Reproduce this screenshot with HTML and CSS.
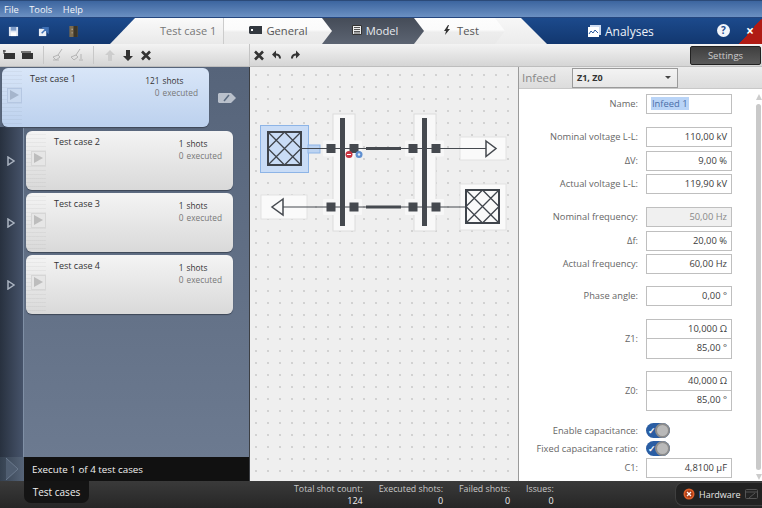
FILE: index.html
```html
<!DOCTYPE html>
<html lang="en">
<head>
<meta charset="utf-8">
<title>Test case 1</title>
<link rel="stylesheet" href="styles.css">
</head>
<body>
<div class="app">
  <nav class="menubar"><span>File</span><span>Tools</span><span>Help</span></nav>

  <header class="ribbon">
    <div class="ribbon-tools">
      <svg class="ic" viewBox="0 0 12 12"><path d="M1 1h10v10H1z" fill="#dfe6f2"/><path d="M3 1h6v4H3z" fill="#7f9cc8"/><path d="M3 7h6v4H3z" fill="#fff"/></svg>
      <svg class="ic" viewBox="0 0 12 12"><path d="M1 3h8v8H1z" fill="#e9eef6"/><path d="M4 8l5-5M6 2h5v5z" stroke="#3f70b5" stroke-width="1.6" fill="#3f70b5"/></svg>
      <svg class="ic" viewBox="0 0 12 12"><path d="M1.500 0h9v12h-9z" fill="#7b6b4f"/><path d="M6 0h4.500v12H6z" fill="#3b3528"/><path d="M4 3h1v1H4zM4 7h1v1H4z" fill="#ddd"/></svg>
    </div>
    <div class="case-tab">Test case 1</div>
    <div class="tab tab-light tab-1">
      <svg class="tab-ic" viewBox="0 0 13 8"><path d="M1 0h12v8H1l-1-1V1z" fill="#33383f"/><path d="M2 3h2v2H2z" fill="#fff"/></svg>General
    </div>
    <div class="tab tab-dark tab-2">
      <svg class="tab-ic tab-ic-s" viewBox="0 0 10 10"><path d="M.500.500h9v9h-9z" fill="#eee" stroke="#333"/><path d="M2 2.500h6M2 4.500h6M2 6.500h6M2 8h6" stroke="#555"/></svg>Model
    </div>
    <div class="tab tab-light tab-3">
      <svg class="tab-ic tab-ic-b" viewBox="0 0 6 10"><path d="M4 0L0 6h2L1 10l5-6H3.500L5 0z" fill="#333"/></svg>Test
    </div>
    <div class="tail"></div>
    <div class="analyses">
      <svg class="an-ic" viewBox="0 0 13 12"><path d="M2 0h11v10h-2V2H2z" fill="#cfdcf0"/><path d="M0 2h11v10H0z" fill="#fff"/><path d="M1 9l2-3 2 2 2-3 3 3" stroke="#2c5aa0" fill="none"/></svg>
      Analyses
    </div>
    <div class="help">?</div>
    <div class="close">×</div>
  </header>

  <div class="toolbar">
    <div class="tb-left">
      <svg class="tb" viewBox="0 0 12 10"><path d="M1 3h11v6H1z" fill="#333"/><path d="M1 0v4M0 1h3" stroke="#333"/></svg>
      <svg class="tb" viewBox="0 0 12 10"><path d="M0 1h10v2H0z" fill="#777"/><path d="M1 3h11v6H1z" fill="#333"/></svg>
      <i class="sep"></i>
      <svg class="tb tb-dim" viewBox="0 0 12 12"><path d="M9 0L5 6M0 8l5-2 2 2-4 3zM0 11h6" stroke="#b4b4b4" fill="none"/></svg>
      <svg class="tb tb-dim" viewBox="0 0 12 12"><path d="M9 0L5 6M0 8l5-2 2 2-4 3zM8 11h4M10 5v5" stroke="#b4b4b4" fill="none"/></svg>
      <i class="sep sep2"></i>
      <svg class="tb-s" viewBox="0 0 10 11"><path d="M5 0l5 5H7v6H3V5H0z" fill="#cdcdcd"/></svg>
      <svg class="tb-s" viewBox="0 0 10 11"><path d="M5 11L0 6h3V0h4v6h3z" fill="#333"/></svg>
      <svg class="tb-s" viewBox="0 0 10 10"><path d="M1 1l8 8M9 1l-8 8" stroke="#333" stroke-width="2.600"/></svg>
    </div>
    <div class="tb-mid">
      <svg class="tb-s" viewBox="0 0 10 10"><path d="M1 1l8 8M9 1l-8 8" stroke="#333" stroke-width="2.600"/></svg>
      <svg class="tb-s" viewBox="0 0 10 10"><path d="M9 8C9 4 6 3 4 3V0L0 4l4 4V5c2 0 3 1 3 3z" fill="#333"/></svg>
      <svg class="tb-s" viewBox="0 0 10 10"><path d="M1 8C1 4 4 3 6 3V0l4 4-4 4V5C4 5 3 6 3 8z" fill="#333"/></svg>
    </div>
    <button class="settings">Settings</button>
  </div>

  <main class="main">
    <section class="cases">
      <div class="case-list">
        <div class="rail"></div>
        <article class="card card-active">
          <div class="strip"><span class="play"></span></div>
          <div class="card-body">
            <h3>Test case 1</h3>
            <dl class="stats"><dt>121</dt><dd>shots</dd><dt class="mute">0</dt><dd class="mute">executed</dd></dl>
          </div>
          <svg class="tag" viewBox="0 0 18 10"><path d="M1 0h12l5 5-5 5H1L0 9V1z" fill="#b9c0cb"/><path d="M6 8l5-6" stroke="#5b6b80" stroke-width="1.500"/></svg>
        </article>
        <article class="card">
          <svg class="rail-arrow" viewBox="0 0 8 10"><path d="M1 1l6 4-6 4z" fill="none" stroke="#aab3c0" stroke-width="1.500"/></svg>
          <div class="strip"><span class="play"></span></div>
          <div class="card-body">
            <h3>Test case 2</h3>
            <dl class="stats"><dt>1</dt><dd>shots</dd><dt class="mute">0</dt><dd class="mute">executed</dd></dl>
          </div>
        </article>
        <article class="card">
          <svg class="rail-arrow" viewBox="0 0 8 10"><path d="M1 1l6 4-6 4z" fill="none" stroke="#aab3c0" stroke-width="1.500"/></svg>
          <div class="strip"><span class="play"></span></div>
          <div class="card-body">
            <h3>Test case 3</h3>
            <dl class="stats"><dt>1</dt><dd>shots</dd><dt class="mute">0</dt><dd class="mute">executed</dd></dl>
          </div>
        </article>
        <article class="card">
          <svg class="rail-arrow" viewBox="0 0 8 10"><path d="M1 1l6 4-6 4z" fill="none" stroke="#aab3c0" stroke-width="1.500"/></svg>
          <div class="strip"><span class="play"></span></div>
          <div class="card-body">
            <h3>Test case 4</h3>
            <dl class="stats"><dt>1</dt><dd>shots</dd><dt class="mute">0</dt><dd class="mute">executed</dd></dl>
          </div>
        </article>
      </div>
      <div class="execute">
        <div class="exec-play"><svg viewBox="0 0 14 24"><path d="M1 1l12 11L1 23" fill="#4f5d70" stroke="#6b7a8e"/></svg></div>
        <div class="exec-text">Execute 1 of 4 test cases</div>
      </div>
    </section>

    <section class="canvas">
      <svg class="diagram" viewBox="250 67 268 414" width="268" height="414">
        <defs>
          <g id="lattice" fill="none" stroke="#3f444b">
            <path stroke-width="2" d="M0 0h33v33H0z"/>
            <path stroke-width="1.300" d="M0 16.500L16.500 0 33 16.500 16.500 33zM0 0l33 33M33 0L0 33"/>
          </g>
          <g id="conn"><rect x="-8" y="-8" width="16" height="16" rx="1" fill="#f7f7f7"/><rect x="-4.500" y="-4.500" width="9" height="9" fill="#45494f"/></g>
        </defs>
        <rect x="333" y="114" width="22" height="117" fill="#f8f8f8" stroke="#dcdcdc"/>
        <rect x="340" y="118" width="5" height="108" fill="#45494f"/>
        <rect x="414" y="114" width="22" height="117" fill="#f8f8f8" stroke="#dcdcdc"/>
        <rect x="422" y="118" width="5" height="108" fill="#45494f"/>

        <rect x="260.500" y="125.500" width="48" height="47" fill="#c9dcf6" stroke="#8db4e6"/>
        <rect x="308" y="145" width="12" height="8" fill="#bcd3f1" stroke="#8db4e6"/>
        <use href="#lattice" x="268" y="132"/>

        <rect x="460" y="137" width="46" height="23" fill="#fafafa" stroke="#e2e2e2"/>
        <rect x="261" y="195" width="46" height="24" fill="#fafafa" stroke="#e2e2e2"/>
        <rect x="460" y="184" width="46" height="46" fill="#fafafa" stroke="#e2e2e2"/>
        <use href="#lattice" x="466" y="190"/>

        <use href="#conn" x="331" y="148.500"/><use href="#conn" x="354" y="148.500"/>
        <use href="#conn" x="413" y="148.500"/><use href="#conn" x="436" y="148.500"/>
        <use href="#conn" x="331" y="207"/><use href="#conn" x="354" y="207"/>
        <use href="#conn" x="413" y="207"/><use href="#conn" x="436" y="207"/>

        <path d="M301 148.500H486M283 207H466" stroke="#45494f" fill="none"/>
        <path d="M366 148.500H401M366 207H401" stroke="#45494f" stroke-width="3" fill="none"/>
        <path d="M486 141l10 7.500-10 8z" fill="#fafafa" stroke="#45494f" stroke-width="1.500"/>
        <path d="M283 199l-11 8 11 8z" fill="#fafafa" stroke="#45494f" stroke-width="1.500"/>

        <circle cx="349" cy="154.500" r="3.500" fill="#c8323f"/><path d="M347 154.500h4" stroke="#fff"/>
        <circle cx="359" cy="154.500" r="3.500" fill="#5f8fd0"/><circle cx="359" cy="154.500" r="1.200" fill="#dfe9f7"/>
      </svg>
    </section>

    <aside class="props">
      <div class="props-head">
        <span class="props-title">Infeed</span>
        <div class="select"><b>Z1, Z0</b><i class="caret"></i></div>
      </div>
      <div class="props-body">
        <form class="form">
          <label>Name:</label><div class="field field-left"><span class="sel">Infeed 1</span></div>
          <label class="gap">Nominal voltage L-L:</label><div class="field gap">110,00 kV</div>
          <label class="nudge">ΔV:</label><div class="field nudge">9,00 %</div>
          <label>Actual voltage L-L:</label><div class="field">119,90 kV</div>
          <label class="gap">Nominal frequency:</label><div class="field field-off gap">50,00 Hz</div>
          <label class="nudge">Δf:</label><div class="field nudge">20,00 %</div>
          <label>Actual frequency:</label><div class="field">60,00 Hz</div>
          <label class="gap-s">Phase angle:</label><div class="field gap-s">0,00 °</div>
          <label class="gap tall">Z1:</label><div class="stack gap"><div class="field">10,000 Ω</div><div class="field">85,00 °</div></div>
          <label class="gap-s tall">Z0:</label><div class="stack gap-s"><div class="field">40,000 Ω</div><div class="field">85,00 °</div></div>
          <label class="gap-s short">Enable capacitance:</label><div class="toggle gap-s"><i></i></div>
          <label class="short">Fixed capacitance ratio:</label><div class="toggle"><i></i></div>
          <label class="pull">C1:</label><div class="field pull">4,8100 µF</div>
        </form>
        <div class="scroll"><i class="up"></i><i class="thumb"></i><i class="down"></i></div>
      </div>
    </aside>
  </main>

  <footer class="status">
    <div class="status-tab">Test cases</div>
    <div class="metric m1"><span>Total shot count:</span><b>124</b></div>
    <div class="metric"><span>Executed shots:</span><b>0</b></div>
    <div class="metric"><span>Failed shots:</span><b>0</b></div>
    <div class="metric"><span>Issues:</span><b>0</b></div>
    <div class="hardware">
      <svg class="hw-x" viewBox="0 0 12 12"><circle cx="6" cy="6" r="5.500" fill="#e0602a"/><circle cx="6" cy="6" r="3.800" fill="#a83a14"/><path d="M4 4l4 4M8 4l-4 4" stroke="#fff" stroke-width="1.300"/></svg>
      <span class="hw-label">Hardware</span>
      <svg class="hw-i" viewBox="0 0 13 10"><rect x=".5" y=".5" width="12" height="9" rx="1" fill="#232323" stroke="#555"/><path d="M1 3h11M4 9l6-5" stroke="#555"/></svg>
    </div>
  </footer>
</div>
</body>
</html>
```

FILE: styles.css
```css
* { box-sizing: border-box; margin: 0; padding: 0; }
html, body { width: 762px; height: 508px; overflow: hidden; }
body { font-family: "Open Sans", "Noto Sans", sans-serif; font-size: 9.5px; color: #444; background: #333; }
.app { width: 762px; height: 508px; display: flex; flex-direction: column; }

.menubar { height: 18px; display: flex; gap: 10.500px; padding: 2px 0 0 4px; font-size: 9.300px; line-height: 14px; color: #f4f6fa; background: linear-gradient(#3c659f, #6b90c2); border-top: 1px solid #2b4a78; border-bottom: 1px solid #24467e; }

.ribbon { height: 26px; display: flex; position: relative; background: linear-gradient(#1c4a8c, #12376f); }
.ribbon-tools { width: 110px; flex: none; display: flex; gap: 19px; padding: 8px 0 0 8px; }
.ic { width: 11px; height: 11px; }
.case-tab { width: 113px; flex: none; background: linear-gradient(#fafafa, #e9e9e9); clip-path: polygon(25px 0, 100% 0, 100% 100%, 0 100%); font-size: 11px; line-height: 26px; padding-left: 50px; color: #777; }
.tab { flex: none; height: 26px; display: flex; align-items: center; justify-content: center; gap: 4px; font-size: 11.200px; padding-bottom: 2px; position: relative; clip-path: polygon(0 0, calc(100% - 10px) 0, 100% 50%, calc(100% - 10px) 100%, 0 100%); }
.tab-light { background: linear-gradient(#fdfdfd 0, #fbfbfb 45%, #ededed 55%, #e9e9e9); color: #555; }
.tab-dark { background: linear-gradient(#454c58, #5c6472); color: #e8eaee; }
.tab-1 { width: 109px; z-index: 3; box-shadow: inset 1px 0 #ccc; padding-left: 2px; }
.tab-2 { width: 102px; margin-left: -10px; z-index: 2; padding-left: 4px; }
.tab-3 { width: 91px; margin-left: -10px; z-index: 1; padding-left: 4px; }
.tab-ic { width: 13px; height: 8px; }
.tab-ic-s { width: 10px; height: 10px; }
.tab-ic-b { width: 6px; height: 10px; margin-right: 3px; }
.tail { width: 52px; margin-left: -10px; flex: none; background: linear-gradient(#f7f7f7, #ececec); clip-path: polygon(0 0, 26px 0, 100% 100%, 0 100%); }
.analyses { width: 154px; flex: none; display: flex; align-items: center; padding-left: 41px; gap: 4px; color: #eef2f8; font-size: 12px; }
.an-ic { width: 13px; height: 12px; }
.help { width: 13px; height: 13px; flex: none; margin: 6px 0 0 16px; border-radius: 50%; background: #f2f5fa; color: #1c4a8c; font-size: 10px; font-weight: 700; line-height: 13px; text-align: center; }
.close { flex: 1; text-align: right; padding-right: 8px; color: #fff; font-size: 14px; font-weight: 700; line-height: 26px; background: linear-gradient(to bottom right, transparent 50%, #b01b14 50%) right / 23px 100% no-repeat; }

.toolbar { height: 23px; display: flex; align-items: center; background: linear-gradient(#f3f3f3, #d5d5d5); border-bottom: 1px solid #bdbdbd; }
.tb-left { width: 250px; height: 100%; flex: none; display: flex; align-items: center; gap: 6px; padding-left: 3px; border-right: 1px solid #c4c4c4; }
.tb-mid { display: flex; align-items: center; gap: 6px; padding-left: 3px; flex: 1; }
.tb { width: 12px; height: 10px; flex: none; }
.tb-dim { height: 12px; }
.tb-s { width: 10px; height: 11px; margin: 0 1px; flex: none; }
.sep { width: 1px; height: 18px; background: #c8c8c8; margin: 0 3px 0 4px; flex: none; }
.sep2 { margin-right: 4px; }
.settings { width: 71px; height: 19px; margin-right: 1px; font: inherit; font-size: 9.5px; color: #ccc; border: 1px solid #222; border-radius: 2px; background: linear-gradient(#3f3f3f, #5a5a5a); }

.main { height: 414px; display: grid; grid-template-columns: 250px 269px 243px; }

.cases { display: flex; flex-direction: column; background: #58677c; border-right: 1px solid #3c3f44; }
.case-list { flex: 1; position: relative; display: flex; flex-direction: column; align-items: flex-end; gap: 3px; padding: 1px 16px 0 0; background: linear-gradient(#56647a, #6c7a90); }
.rail { position: absolute; left: 0; top: 60px; bottom: 0; width: 24px; background: linear-gradient(90deg, #28313f, #46536a); border-right: 1px solid #8090a6; }
.card { width: 207px; height: 59px; position: relative; display: flex; border-radius: 6px; background: linear-gradient(#f4f4f4, #d9d9d9); box-shadow: 0 1px 1px #3c4656; }
.card-active { width: 207px; margin: 0 24px 1px 0; background: linear-gradient(#d9e6f8, #bcd1ee); }
.strip { width: 20px; flex: none; padding: 20px 0 0 5px; background: repeating-linear-gradient(#0000 0 3px, #0000000a 3px 4px); }
.play { display: block; width: 15px; height: 15px; position: relative; background: #e6e6e6; border: 1px solid #d6d6d6; }
.play::after { content: ""; position: absolute; left: 2px; top: 1px; border-left: 9px solid #bdbdbd; border-top: 5.500px solid transparent; border-bottom: 5.500px solid transparent; }
.card-active .play { background: #c9d9ef; border-color: #b5c7e2; }
.card-active .play::after { border-left-color: #a5b5cc; }
.card-body { flex: 1; display: flex; justify-content: space-between; padding: 4px 11px 0 8px; }
h3 { font-size: 9px; font-weight: 400; line-height: 14px; color: #333; }
.stats { display: grid; grid-template-columns: auto auto; column-gap: 3px; align-content: start; margin-top: 3px; line-height: 12px; font-size: 8.300px; color: #333; }
.stats dt { text-align: right; }
.mute { color: #777; }
.tag { position: absolute; right: -27px; top: 25px; width: 18px; height: 10px; }
.rail-arrow { position: absolute; left: -19px; top: 25px; width: 8px; height: 10px; }

.execute { height: 24px; flex: none; display: flex; background: #111; }
.exec-play { width: 24px; display: flex; justify-content: center; background: linear-gradient(90deg, #34404f, #566478); }
.exec-play svg { width: 14px; height: 24px; }
.exec-text { padding-left: 8px; color: #f0f0f0; font-size: 9.800px; line-height: 25px; }

.canvas { background-color: #efefef; background-image: radial-gradient(circle at 1px 1px, #c2c2c2 .6px, transparent .9px); background-size: 12px 12px; background-position: 5px 7px; border-right: 1px solid #9a9a9a; }
.diagram { display: block; }

.props { display: flex; flex-direction: column; background: #fff; }
.props-head { height: 22px; flex: none; display: flex; align-items: center; gap: 17px; padding-left: 3px; background: linear-gradient(#ececec, #dcdcdc); border-bottom: 1px solid #c8c8c8; }
.props-title { width: 33px; font-size: 11.500px; color: #888; }
.select { width: 106px; height: 20px; display: flex; justify-content: space-between; align-items: center; padding: 0 6px 0 4px; border: 1px solid #9a9a9a; background: linear-gradient(#f3f3f3, #e6e6e6); font-size: 9px; color: #333; }
.caret { border-top: 3px solid #444; border-left: 3px solid transparent; border-right: 3px solid transparent; }
.props-body { flex: 1; display: flex; min-height: 0; }
.form { width: 236px; display: grid; grid-template-columns: 119px 86px; column-gap: 8px; grid-auto-rows: min-content; row-gap: 3px; padding: 5px 0 0 0; align-content: start; }
.form label { text-align: right; line-height: 20px; color: #666; font-size: 9.300px; }
.field { height: 20px; border: 1px solid #bfbfbf; padding: 0 4px; text-align: right; line-height: 18px; font-size: 9.400px; color: #3c3c3c; background: #fff; }
.field-left { text-align: left; }
.field-off { background: #f0f0f0; color: #888; }
.sel { background: #b9d4f7; color: #4b6fa8; padding: 0 1px; }
.gap { margin-top: 10px; }
.gap-s { margin-top: 9px; }
.nudge { margin-top: 1px; }
.pull { margin-top: -1px; }
.stack { display: flex; flex-direction: column; }
.stack .field + .field { margin-top: 0; border-top-width: 0; }
.tall { line-height: 40px !important; }
.short { line-height: 15px !important; }
.toggle { width: 24px; height: 15px; border-radius: 8px; position: relative; background: #2a5da3; }
.toggle i { position: absolute; right: 0; top: 0; width: 15px; height: 15px; border-radius: 50%; background: #b9b9b9; border: 2px solid #8c8c8c; }
.toggle::before { content: "✓"; position: absolute; left: 2px; top: 0; color: #fff; font-size: 9px; line-height: 15px; font-weight: 700; }
.scroll { flex: 1; display: flex; flex-direction: column; align-items: center; padding: 5px 0 1px; gap: 4px; }
.thumb { flex: 1; width: 5px; border-radius: 3px; background: #c9c9c9; }
.up { border-bottom: 6px solid #ccc; border-left: 3.500px solid transparent; border-right: 3.500px solid transparent; }
.down { border-top: 6px solid #ccc; border-left: 3.500px solid transparent; border-right: 3.500px solid transparent; }

.status { height: 27px; flex: none; display: flex; position: relative; color: #c8c8c8; background: linear-gradient(#3a3a3a, #262626); }
.status-tab { width: 65px; height: 22px; margin-left: 24px; background: #141414; border-radius: 0 0 7px 7px; color: #eee; font-size: 10px; line-height: 22px; text-align: center; }
.metric { display: flex; flex-direction: column; align-items: flex-end; margin-left: 16px; font-size: 8.800px; line-height: 12px; padding-top: 2px; }
.metric b { font-weight: 400; color: #eee; font-size: 9px; }
.m1 { margin-left: 205px; }
.hardware { position: absolute; right: 0; top: 1px; width: 87px; height: 24px; display: flex; align-items: center; gap: 4px; padding-left: 7px; border-radius: 8px 0 0 8px; background: #222; border: 1px solid #3f3f3f; border-right: 0; color: #e6e6e6; font-size: 9px; }
.hw-x { width: 12px; height: 12px; }
.hw-i { width: 13px; height: 10px; }
```
